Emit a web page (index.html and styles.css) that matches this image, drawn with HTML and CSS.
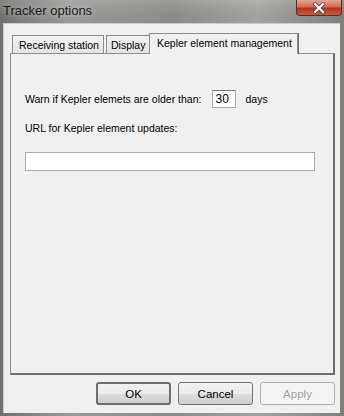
FILE: index.html
```html
<!DOCTYPE html>
<html>
<head>
<meta charset="utf-8">
<link rel="stylesheet" href="styles.css">
</head>
<body>
<div class="window">
  <div class="titlebar">
    <span class="title">Tracker options</span>
    <div class="close">
      <svg width="18" height="12" viewBox="0 0 18 12"><path d="M5 2 L13 10 M13 2 L5 10" stroke="#4a4a4a" stroke-width="3.6" stroke-linecap="square"/><path d="M5 2 L13 10 M13 2 L5 10" stroke="#fff" stroke-width="2" stroke-linecap="square"/></svg>
    </div>
  </div>
  <div class="client">
    <div class="tabs">
      <div class="tab t1">Receiving station</div>
      <div class="tab t2">Display</div>
      <div class="tab active">Kepler element management</div>
    </div>
    <div class="panel">
      <div class="row warn">
        <span>Warn if Kepler elemets are older than:</span>
        <span class="num">30</span>
        <span>days</span>
      </div>
      <div class="row url">URL for Kepler element updates:</div>
      <div class="urlbox"></div>
    </div>
    <div class="buttons">
      <div class="btn default">OK</div>
      <div class="btn">Cancel</div>
      <div class="btn disabled">Apply</div>
    </div>
  </div>
</div>
</body>
</html>
```
FILE: styles.css
```css
html, body { margin: 0; padding: 0; }
body {
  width: 344px; height: 416px; overflow: hidden;
  font-family: "Liberation Sans", Arial, sans-serif;
  font-size: 10.5px; color: #000;
}
.window {
  width: 344px; height: 416px; box-sizing: border-box;
  background: linear-gradient(90deg, #6f726c 0%, #9a9b97 20%, #8a8c88 50%, #a3a4a0 75%, #7e817b 100%);
  display: flex; flex-direction: column;
  position: relative;
}
.titlebar {
  height: 23px; flex: none;
  display: flex; align-items: flex-start;
  position: relative;
  background: linear-gradient(180deg, rgba(255,255,255,0.15), rgba(255,255,255,0) 60%);
}
.title {
  font-family: "Liberation Sans", Arial, sans-serif;
  font-size: 13px; color: #1a1a1a;
  margin: 3px 0 0 3px;
  text-shadow: 0 0 6px rgba(255,255,255,0.7);
}
.close {
  position: absolute; top: 0; right: 2px;
  width: 46px; height: 16px; box-sizing: border-box;
  border: 1px solid #5c2a22; border-top: none;
  border-radius: 0 0 4px 4px;
  background: linear-gradient(180deg, #e3a597 0%, #d36a55 45%, #b8321c 55%, #c75a40 100%);
  display: flex; align-items: center; justify-content: center;
}
.client {
  flex: 1;
  margin: 0 4px 3px 3px;
  background: #f0f0f0;
  border-top: 1px solid #c9c9c9;
  border-left: 1px solid #c9c9c9;
  padding: 10px 5px 0 6px;
  display: flex; flex-direction: column;
}
.tabs {
  display: flex; align-items: flex-end;
  height: 19px; padding-left: 2px;
  position: relative; z-index: 2;
}
.tab {
  height: 18px; box-sizing: border-box;
  border: 1px solid #898c95; border-bottom: none;
  background: linear-gradient(180deg, #f2f2f2, #e3e3e3);
  padding: 3px 5px 0 6px;
  color: #000; white-space: nowrap;
}
.t1 { width: 92px; }
.t2 { width: 44px; margin-left: 2px; padding-left: 4px; padding-right: 0; }
.tab.active {
  height: 21px; width: 149px;
  background: #f0f0f0;
  margin-left: -1px; margin-bottom: -1px;
  padding-top: 3px; padding-left: 7px;
  box-shadow: 1px 0 0 #6d6d6d;
}
.panel {
  height: 322px; box-sizing: border-box;
  border: 1px solid #898c95;
  border-right: 2px solid #6d6d6d;
  border-bottom: 2px solid #6d6d6d;
  background: #f0f0f0;
  padding: 36px 0 0 14px;
}
.row { display: flex; align-items: center; }
.warn { height: 18px; }
.num {
  width: 24px; height: 18px; box-sizing: border-box;
  border: 1px solid #abadb3; border-top-color: #7a7a7a;
  background: #fff; padding: 1px 0 0 2px;
  font-size: 12px; margin-left: 11px; margin-right: 9px;
}
.url { margin-top: 13px; height: 14px; }
.urlbox {
  margin-top: 17px;
  width: 290px; height: 19px; box-sizing: border-box;
  border: 1px solid #abadb3; background: #fff;
}
.buttons {
  display: flex; justify-content: flex-end; gap: 7px;
  margin-top: 7px;
}
.btn {
  width: 75px; height: 23px; box-sizing: border-box;
  border: 1px solid #707070; border-radius: 3px;
  background: linear-gradient(180deg, #f2f2f2 0%, #ebebeb 50%, #dddddd 51%, #cfcfcf 100%);
  display: flex; align-items: center; justify-content: center;
  font-size: 11.5px;
}
.btn.default { border: 2px solid #6e6e6e; }
.btn.disabled {
  color: #a0a0a0; border-color: #adb2b5;
  background: #f4f4f4;
}
```
